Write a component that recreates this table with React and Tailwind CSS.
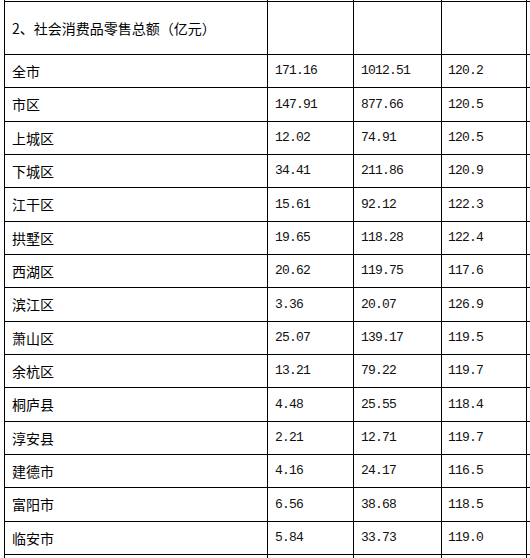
import React from 'react';

const rows = [
  ['全市', '171.16', '1012.51', '120.2'],
  ['市区', '147.91', '877.66', '120.5'],
  ['上城区', '12.02', '74.91', '120.5'],
  ['下城区', '34.41', '211.86', '120.9'],
  ['江干区', '15.61', '92.12', '122.3'],
  ['拱墅区', '19.65', '118.28', '122.4'],
  ['西湖区', '20.62', '119.75', '117.6'],
  ['滨江区', '3.36', '20.07', '126.9'],
  ['萧山区', '25.07', '139.17', '119.5'],
  ['余杭区', '13.21', '79.22', '119.7'],
  ['桐庐县', '4.48', '25.55', '118.4'],
  ['淳安县', '2.21', '12.71', '119.7'],
  ['建德市', '4.16', '24.17', '116.5'],
  ['富阳市', '6.56', '38.68', '118.5'],
  ['临安市', '5.84', '33.73', '119.0'],
];

// line spacing in the picture is 33 / 34 px alternately
const tall = [1, 4, 7, 10, 13];

const num = "flex items-center text-[13px] tracking-[-0.8px] text-[#111] font-['Liberation_Mono',monospace]";

const Row = ({ cells, h, top = true }) => (
  <div className={`flex ${top ? 'border-t border-black' : ''} ${h}`}>
    <div className="w-[263px] border-l border-black flex items-center pl-[7px] text-[14px] text-black font-['Noto_Sans_CJK_SC',sans-serif]">
      {cells[0]}
    </div>
    <div className={`w-[86px] border-l border-black pl-[7px] ${num}`}>{cells[1]}</div>
    <div className={`w-[88px] border-l border-black pl-[7px] ${num}`}>{cells[2]}</div>
    <div className={`w-[86px] border-x border-black pl-[6px] ${num}`}>{cells[3]}</div>
  </div>
);

export default function App() {
  return (
    <div className="w-[530px] h-[558px] bg-white overflow-hidden pl-[4px]">
      {/* tail of the row above */}
      <Row cells={['', '', '', '']} h="h-[1px]" top={false} />
      <Row cells={['2、社会消费品零售总额（亿元）', '', '', '']} h="h-[53px]" />
      {rows.map((r, i) => (
        <Row key={r[0]} cells={r} h={tall.includes(i) ? 'h-[34px]' : 'h-[33px]'} />
      ))}
      <Row cells={['', '', '', '']} h="h-[33px]" />
    </div>
  );
}
